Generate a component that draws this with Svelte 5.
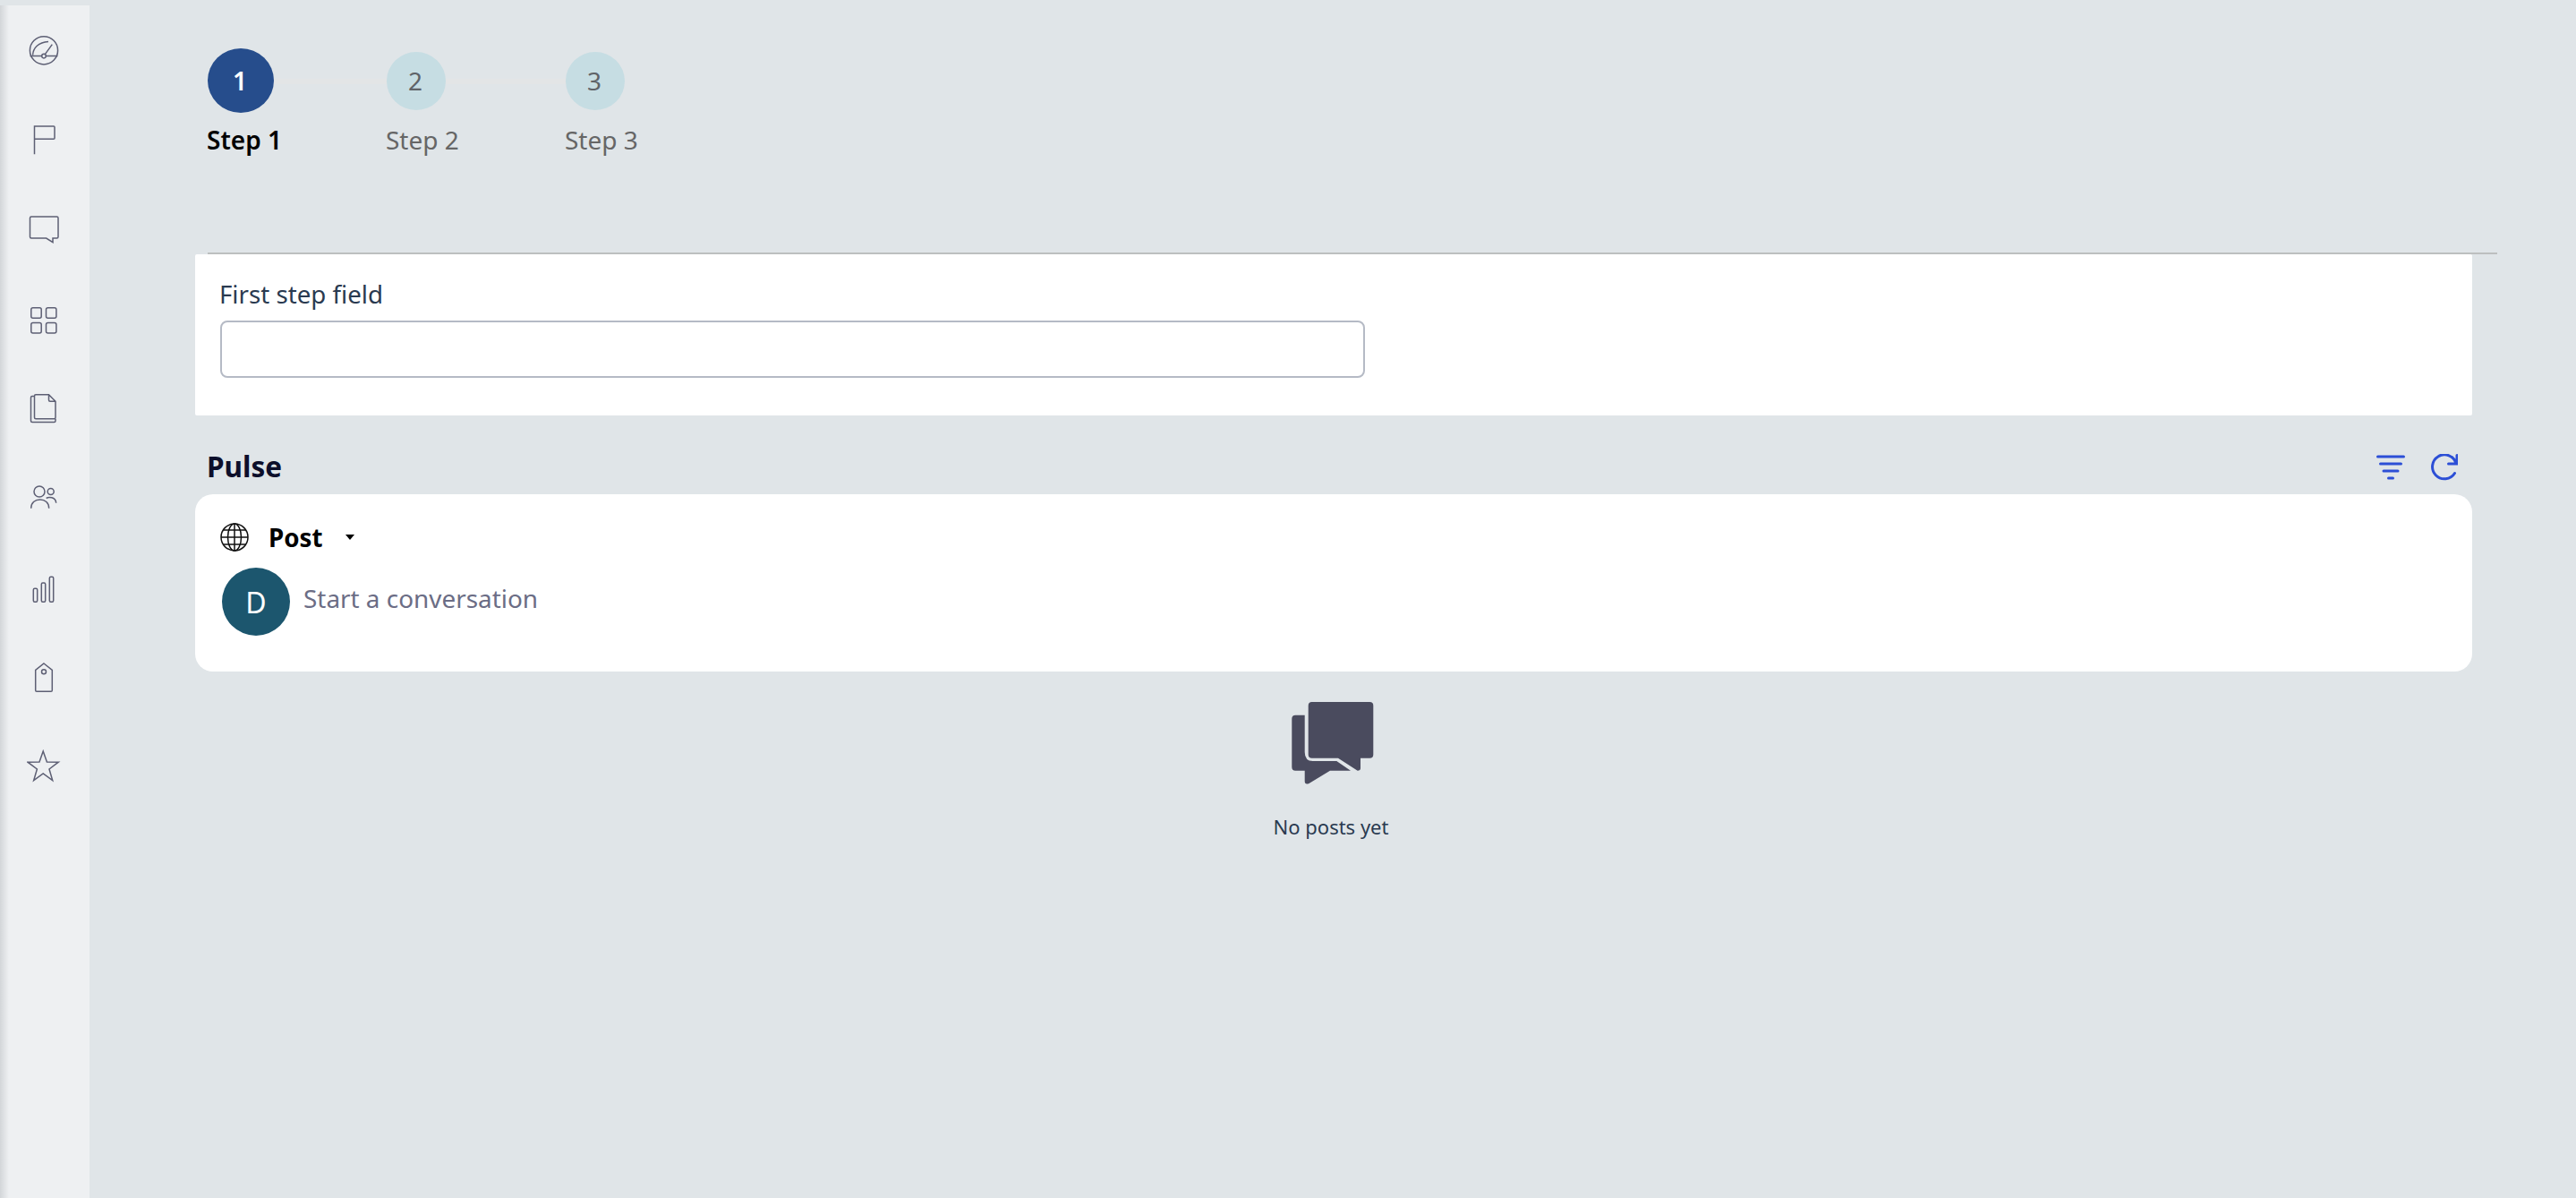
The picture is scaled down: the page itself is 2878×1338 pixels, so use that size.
<script>
  const steps = [
    { n: 1, label: 'Step 1', active: true },
    { n: 2, label: 'Step 2' },
    { n: 3, label: 'Step 3' }
  ];
</script>

<div class="page">
  <nav class="rail">
    <button aria-label="Dashboard">
      <svg viewBox="0 0 40 40"><circle cx="19" cy="20.3" r="15.6" /><path d="M3.600 26.400H16.700M21.300 26.400H34.400M20.300 24.600 28.300 13.600M6.600 25.500C7 17.500 13 11.200 24 10.500" /><circle cx="19" cy="26.600" r="2.300" /></svg>
    </button>
    <button aria-label="Flags">
      <svg viewBox="0 0 40 40"><path d="M8.500 36.300V5H30q1 0 1 1V18.300q0 1-1 1H8.500" /></svg>
    </button>
    <button aria-label="Messages">
      <svg viewBox="0 0 40 40"><path d="M5 6H33.500q1.500 0 1.500 1.500V28.500q0 1.500-1.500 1.500H29V34.700L21.700 30H5q-1.500 0-1.500-1.500V7.500Q3.500 6 5 6Z" /></svg>
    </button>
    <button aria-label="Apps">
      <svg viewBox="0 0 40 40"><rect x="4.800" y="7.800" width="11.400" height="11.400" rx="2" /><rect x="21.500" y="7.800" width="11.400" height="11.400" rx="2" /><rect x="4.800" y="24.500" width="11.400" height="11.400" rx="2" /><rect x="21.500" y="24.500" width="11.400" height="11.400" rx="2" /></svg>
    </button>
    <button aria-label="Documents">
      <svg viewBox="0 0 40 40"><path d="M10 4.700H24.500L32 12.200V30.200q0 1.500-1.500 1.500H10q-1.500 0-1.500-1.500V6.200Q8.500 4.700 10 4.700ZM24.500 4.700V10.700q0 1.500 1.500 1.500H32M8.500 6.500H6q-1.500 0-1.500 1.500V34q0 1.500 1.500 1.500H30.500q1.500 0 1.500-1.500V31.700" /></svg>
    </button>
    <button aria-label="People">
      <svg viewBox="0 0 40 40"><circle cx="14" cy="13" r="6" /><path d="M4.700 31.700C4.700 25.500 9 22 14.700 22S24.700 25.500 24.700 31.700" /><circle cx="26.700" cy="13" r="3.500" /><path d="M21.700 20.500C24 19 32 18.500 32.700 25.700" /></svg>
    </button>
    <button aria-label="Reports">
      <svg viewBox="0 0 40 40"><rect x="7.300" y="21.300" width="4.400" height="15" rx="1.500" /><rect x="16.300" y="15" width="4.400" height="21.300" rx="1.500" /><rect x="25.300" y="8.300" width="4.400" height="28" rx="1.500" /></svg>
    </button>
    <button aria-label="Tags">
      <svg viewBox="0 0 40 40"><path d="M19 5 28.300 12.300V35q0 1.300-1.300 1.300H11q-1.300 0-1.300-1.300V12.300Z" /><circle cx="19" cy="14.300" r="2.500" /></svg>
    </button>
    <button aria-label="Favorites">
      <svg viewBox="0 0 40 40"><path d="M18.200 3 22.400 15 35.300 15.200 25 23 28.700 35.500 18.200 28 7.700 35.500 11.400 23 1 15.200 14 15Z" /></svg>
    </button>
  </nav>

  <main>
    <ol class="stepper">
      {#each steps as step, i}
        <li class:active={step.active}>
          <div class="marker">
            <span class="dot">{step.n}</span>
            {#if i < steps.length - 1}<span class="line"></span>{/if}
          </div>
          <span class="label">{step.label}</span>
        </li>
      {/each}
    </ol>

    <hr />

    <section class="form">
      <label for="first">First step field</label>
      <input id="first" type="text" />
    </section>

    <header class="pulse-head">
      <h2>Pulse</h2>
      <div class="tools">
        <svg class="filter" viewBox="0 0 32 28" aria-label="Filter"><path d="M1.500 2H30.500M4.500 10H27.500M8 18H24M13.500 26H18.500" /></svg>
        <svg class="refresh" viewBox="0 0 30 30" aria-label="Refresh"><path d="M26.500 21.500A13.500 13.500 0 1 1 28 10.500M29 1.500V11H19.500" /></svg>
      </div>
    </header>

    <section class="composer">
      <div class="audience">
        <svg class="globe" viewBox="0 0 32 32"><circle cx="16" cy="16" r="15" /><ellipse cx="16" cy="16" rx="7.500" ry="15" /><path d="M16 1V31M1 16H31M3.500 8H28.500M3.500 24H28.500" /></svg>
        <strong>Post</strong>
        <span class="caret"></span>
      </div>
      <div class="start">
        <span class="avatar">D</span>
        <span class="prompt">Start a conversation</span>
      </div>
    </section>

    <div class="empty">
      <svg viewBox="0 0 92 92"><path d="M22.700 0H87.300q4 0 4 4V58.700q0 4-4 4H77V74q0 2.700-3.300 2.700L52 62.700H22.700q-4 0-4-4V4q0-4 4-4Z" /><path d="M4.300 14.700H14.700V56q0 10 9 10H50.300L66 76.700H43L19.500 91q-4.800 1.800-4.800-2.500V76.700H4.300q-4 0-4-4V18.700q0-4 4-4Z" /></svg>
      <p>No posts yet</p>
    </div>
  </main>
</div>

<style>
  :global(body) {
    margin: 0;
    background: #e0e5e8;
    font-family: "Noto Sans", "Open Sans", sans-serif;
  }
  .page {
    display: flex;
    min-height: 100vh;
  }
  .rail {
    flex: none;
    width: 100px;
    margin-top: 6px;
    background: linear-gradient(90deg, #d3d6d9 0, #eef0f2 10px);
    display: flex;
    flex-direction: column;
  }
  .rail button {
    width: 100px;
    height: 100px;
    padding: 0;
    border: 0;
    background: none;
    display: flex;
    align-items: center;
    justify-content: center;
  }
  .rail svg {
    width: 40px;
    height: 40px;
    fill: none;
    stroke: #5d5f74;
    stroke-width: 1.500;
  }
  main {
    flex: 1;
    min-width: 0;
    padding: 0 116px 0 118px;
  }
  .stepper {
    list-style: none;
    margin: 0;
    padding: 54px 0 0 14px;
    display: flex;
    height: 282px;
    box-sizing: border-box;
  }
  .stepper li {
    width: 200px;
    display: flex;
    flex-direction: column;
    align-items: flex-start;
  }
  .marker {
    display: flex;
    align-items: center;
    width: 100%;
    height: 72px;
  }
  .dot {
    flex: none;
    width: 66px;
    height: 65px;
    padding-right: 2px;
    box-sizing: border-box;
    border-radius: 50%;
    background: #c6dde3;
    color: #5f6368;
    font-size: 28px;
    display: flex;
    align-items: center;
    justify-content: center;
  }
  .line {
    flex: 1;
    height: 6px;
    margin-top: 2px;
    background: #e3e5e6;
  }
  .label {
    margin: 11px 0 0 -1px;
    font-size: 28px;
    line-height: 38px;
    color: #666;
  }
  .active .dot {
    width: 74px;
    height: 72px;
    background: #264d8c;
    color: #fff;
    font-weight: 600;
  }
  .active .label {
    color: #000;
    font-weight: 600;
  }
  hr {
    margin: 0 -28px 0 14px;
    border: 0;
    height: 2px;
    background: #bcbfbf;
  }
  .form {
    background: #fff;
    border-radius: 2px;
    height: 180px;
    box-sizing: border-box;
    padding: 25px 27px 0;
  }
  label {
    display: block;
    font-size: 27.700px;
    line-height: 38px;
    color: #2a3a50;
    margin-bottom: 11px;
  }
  input {
    display: block;
    width: 1279px;
    height: 64px;
    margin-left: 1px;
    box-sizing: border-box;
    border: 2px solid #b5bac5;
    border-radius: 8px;
    background: #fff;
  }
  .pulse-head {
    display: flex;
    align-items: center;
    justify-content: space-between;
    height: 88px;
    box-sizing: border-box;
    padding: 24px 16px 0 13px;
  }
  h2 {
    margin: 0;
    font-size: 31.500px;
    font-weight: 700;
    color: #0d0f2b;
  }
  .tools {
    display: flex;
    align-items: center;
    gap: 29px;
    margin-top: 3px;
  }
  .tools svg {
    fill: none;
    stroke: #2c4fd6;
    stroke-width: 3;
    stroke-linecap: round;
  }
  .filter {
    width: 32px;
    height: 28px;
  }
  .refresh {
    width: 30px;
    height: 30px;
  }
  .composer {
    background: #fff;
    border-radius: 20px;
    height: 198px;
    box-sizing: border-box;
    padding: 32px 28px 0;
  }
  .audience {
    display: flex;
    align-items: center;
    height: 32px;
  }
  .globe {
    width: 32px;
    height: 32px;
    fill: none;
    stroke: #111;
    stroke-width: 1.500;
  }
  .audience strong {
    margin-left: 22px;
    font-size: 27.700px;
    font-weight: 700;
    color: #000;
  }
  .caret {
    margin-left: 26px;
    border-left: 5.500px solid transparent;
    border-right: 5.500px solid transparent;
    border-top: 6px solid #000;
  }
  .start {
    display: flex;
    align-items: center;
    margin: 18px 0 0 2px;
  }
  .avatar {
    flex: none;
    width: 76px;
    height: 76px;
    border-radius: 50%;
    background: #1c566e;
    color: #fff;
    font-size: 32px;
    display: flex;
    align-items: center;
    justify-content: center;
  }
  .prompt {
    margin: 0 0 8px 15px;
    font-size: 27.900px;
    color: #6b6d85;
  }
  .empty {
    margin-top: 34px;
    display: flex;
    flex-direction: column;
    align-items: center;
    padding-right: 4px;
  }
  .empty svg {
    width: 92px;
    height: 92px;
    margin-left: 2px;
    fill: #4a4b5e;
  }
  .empty p {
    margin: 31px 2px 0 0;
    font-size: 22px;
    line-height: 33px;
    color: #2a3a50;
  }
</style>
